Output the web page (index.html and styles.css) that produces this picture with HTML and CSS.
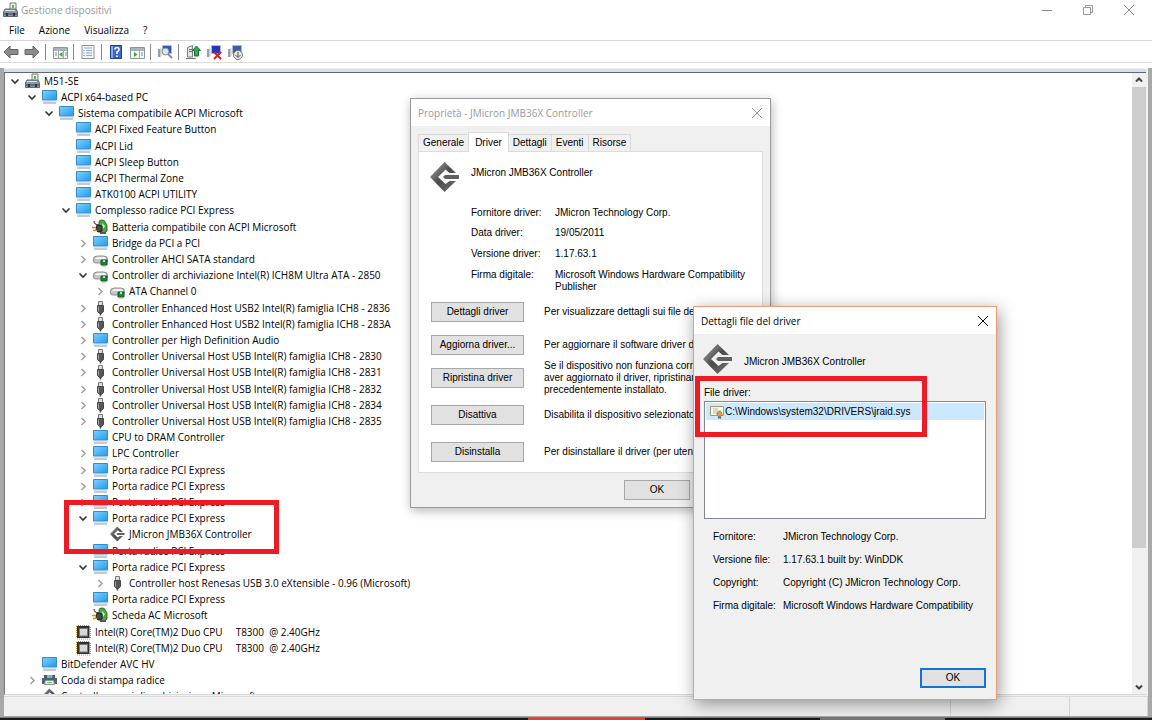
FILE: index.html
```html
<!DOCTYPE html>
<html lang="it">
<head>
<meta charset="utf-8">
<title>Gestione dispositivi</title>
<link rel="stylesheet" href="styles.css">
</head>
<body>
<svg class="defs" aria-hidden="true">
  <defs>
    <linearGradient id="screen" x1="0" y1="0" x2="1" y2="1"><stop offset="0" stop-color="#7fd0fb"/><stop offset="1" stop-color="#1e9cf0"/></linearGradient>
    <linearGradient id="metal" x1="0" y1="0" x2="1" y2="1"><stop offset="0" stop-color="#b0b0b0"/><stop offset=".5" stop-color="#4a4a4a"/><stop offset="1" stop-color="#777"/></linearGradient>
  </defs>
  <symbol id="open" viewBox="0 0 18 16"><path d="M5.500 6.500l3.500 3.500 3.500-3.500" fill="none" stroke="#333" stroke-width="1.6"/></symbol>
  <symbol id="closed" viewBox="0 0 18 16"><path d="M7.500 5l3.500 3.500-3.500 3.500" fill="none" stroke="#9a9a9a" stroke-width="1.4"/></symbol>
  <symbol id="pc" viewBox="0 0 17 16"><path d="M1.500 1.500h14v9.500h-14z" fill="url(#screen)" stroke="#3a8cc0"/><path d="M6 11.500h5v1H6z" fill="#a9bac6"/><path d="M1 12.500h15" stroke="#dbe4ec"/><path d="M2 14h13" stroke="#8398ad"/></symbol>
  <symbol id="machine" viewBox="0 0 17 16"><path d="M8 1h6v7H8z" fill="#eef3ee" stroke="#777"/><path d="M10 3h2v3h-2z" fill="#55b559"/><path d="M3 7h11l1.500 3v4.500h-14V10z" fill="#8b99a3" stroke="#5d6870"/><path d="M3 8h10v1H3z" fill="#dce3e7"/><path d="M2 12h13" stroke="#39424a"/><path d="M4 11h2v3H4zM11 11h2v3h-2z" fill="#2f363c"/></symbol>
  <symbol id="battery" viewBox="0 0 17 16"><path d="M7 3q0-2 3-2t3 2l2 3v6l-3 2-5-1z" fill="#45ad3e" stroke="#234d22" stroke-width=".8"/><path d="M10 4l3 3-2 3z" fill="#d3f1c9"/><path d="M2 2q0 4 5 4" stroke="#222" fill="none"/><path d="M5 6l5 1v5l-4 1-2-2z" fill="#4a4a4a" stroke="#1d1d1d"/><path d="M0 8.500h4M1 11.500h4" stroke="#c9951b" stroke-width="1.600"/><path d="M8 14h6" stroke="#555" stroke-width="2"/></symbol>
  <symbol id="disk" viewBox="0 0 17 16"><path d="M1.500 8q0-3 4-3h6q4 0 4 3v2q0 2-3 2H4q-2.500 0-2.500-2z" fill="#c7c7c7" stroke="#8f8f8f"/><path d="M3 8q1-2 4-2h4q3 0 3 2z" fill="#f4f4f4"/><path d="M9 9h6v5H9z" fill="#21814d" stroke="#0f5632"/><path d="M11 9v2h2V9" fill="#a9e5bb"/><path d="M10 15h4" stroke="#d3a31c"/></symbol>
  <symbol id="usb" viewBox="0 0 17 16"><path d="M6.500 1.500h4v4h-4z" fill="#ddd" stroke="#777"/><path d="M5.500 5.500h6v6l-2 2h-2l-2-2z" fill="#565759" stroke="#46474a"/><path d="M6.500 6.500v5" stroke="#a4a6a9"/><path d="M8.500 13v2.500" stroke="#444" stroke-width="1.500"/></symbol>
  <symbol id="cpu" viewBox="0 0 17 16"><path d="M1.500 2v12M3 1.500h12M15.500 3v12M2 15h13" stroke="#c89225" stroke-dasharray="1 1"/><path d="M2 2h12.500v12H2z" fill="#303030"/><path d="M4 4h9v8.500H4z" fill="#777"/><path d="M5 5h7v6.500H5z" fill="#d8d8d8"/></symbol>
  <symbol id="printer" viewBox="0 0 17 16"><path d="M3 3h11v4H3z" fill="#505b62"/><path d="M6 3h6l-1 3H6z" fill="#4ec9da"/><path d="M1 6h15v6h-3V9H4v3H1z" fill="#566066"/><path d="M4.500 8.500h8l1 4h-10z" fill="#f4f8fa" stroke="#83929b"/><path d="M6 10h5v1H6z" fill="#62c25a"/></symbol>
  <symbol id="jm" viewBox="0 0 32 32"><path d="M1 16L15.500 1 27 12H20.500L16.500 8.500 9 16l7.500 7L20.500 20H27L15.500 31z" fill="url(#metal)"/><path d="M16 14h14v4H16l-2-2z" fill="#606060"/></symbol>
  <symbol id="x" viewBox="0 0 12 12"><path d="M1 1l10 10M11 1L1 11" fill="none" stroke="currentColor"/></symbol>
</svg>

<div class="window">
  <header class="titlebar">
    <svg class="appicon"><use href="#machine"/></svg>
    <h1>Gestione dispositivi</h1>
    <div class="winctl">
      <button aria-label="Riduci a icona"><svg viewBox="0 0 12 12"><path d="M1 6.500h10" stroke="#888"/></svg></button>
      <button aria-label="Ripristina"><svg viewBox="0 0 12 12"><path d="M1.500 3.500h7v7h-7zM3.500 3V1.500h7v7H9" fill="none" stroke="#999"/></svg></button>
      <button aria-label="Chiudi"><svg><use href="#x"/></svg></button>
    </div>
  </header>
  <nav class="menubar"><button>File</button><button>Azione</button><button>Visualizza</button><button>?</button></nav>
  <div class="toolbar">
    <button aria-label="Indietro"><svg viewBox="0 0 16 16"><path d="M1 8l6-6v3.500h8v5H7V14z" fill="#8c8c8c" stroke="#666"/></svg></button>
    <button aria-label="Avanti"><svg viewBox="0 0 16 16"><path d="M15 8L9 2v3.500H1v5h8V14z" fill="#8c8c8c" stroke="#666"/></svg></button>
    <i class="sep"></i>
    <button aria-label="Albero console"><svg viewBox="0 0 16 16"><path d="M1.500 3.500h14v11h-14z" fill="#f6f6f6" stroke="#8d969d"/><path d="M2 4h13v3H2z" fill="#a9b3ba"/><path d="M6.500 7v7M11.500 7v7" stroke="#aaa"/><path d="M3 9h2M3 11h2M13 9h2M13 11h2" stroke="#6a91b5"/><path d="M10.500 8v5L7 10.500z" fill="#39a335"/></svg></button>
    <i class="sep"></i>
    <button aria-label="Proprietà"><svg viewBox="0 0 16 16"><path d="M2 1.500h12v13H2z" fill="#f3f6f8" stroke="#8a949b"/><path d="M4 4h8M6 6.500h6M6 9h6M6 11.500h6" stroke="#8fa9c0"/><path d="M3.500 6.500h1M3.500 9h1M3.500 11.500h1" stroke="#4779ae"/></svg></button>
    <i class="sep"></i>
    <button aria-label="Guida"><svg viewBox="0 0 16 16"><path d="M2.500 1.500h11v13h-11z" fill="#3e69c9" stroke="#20408c"/><path d="M3 2h2v12H3z" fill="#8ba9e8"/><path d="M7 5.500Q7 3.500 9 3.500t2 2Q11 7 9 8v2M9 11.500v1.500" fill="none" stroke="#fff" stroke-width="1.600"/></svg></button>
    <button aria-label="Riquadro azioni"><svg viewBox="0 0 16 16"><path d="M1.500 3.500h14v11h-14z" fill="#f6f6f6" stroke="#8d969d"/><path d="M2 4h13v3H2z" fill="#a9b3ba"/><path d="M10.500 7v7" stroke="#aaa"/><path d="M12 9h2M12 11h2" stroke="#6a91b5"/><path d="M5 8v5l3.500-2.500z" fill="#39a335"/></svg></button>
    <i class="sep"></i>
    <button aria-label="Rileva modifiche hardware"><svg viewBox="0 0 16 16"><path d="M5.500 1.500h9v8h-9z" fill="#2f55b8" stroke="#b4bcc6"/><path d="M1 5h2.500v8H1z" fill="#99a1a8"/><path d="M4 4v8" stroke="#c3c8cc"/><circle cx="8.500" cy="7.500" r="3.500" fill="#cfe8f7" stroke="#77889a"/><path d="M11 10l4 4" stroke="#8a8f95" stroke-width="2"/></svg></button>
    <i class="sep"></i>
    <button aria-label="Aggiorna driver"><svg viewBox="0 0 16 16"><path d="M2.500 3.500L7.500 1.500V13h-5z" fill="#e4e7e4" stroke="#77807a"/><path d="M4 5.500h3M4 7.500h3" stroke="#38804a"/><path d="M1 14.500h10" stroke="#777"/><path d="M11.500 2l4 4.500h-2V12H9.500V6.500h-2z" fill="#39a657" stroke="#1c6b35"/></svg></button>
    <button aria-label="Disinstalla"><svg viewBox="0 0 16 16"><path d="M5.500 1.500h9v8h-9z" fill="#2138b8" stroke="#b4bcc6"/><path d="M1 5h2.500v8H1z" fill="#99a1a8"/><path d="M4 4v8" stroke="#c3c8cc"/><path d="M8 8l7 7M15 8l-7 7" stroke="#d91f1f" stroke-width="2"/></svg></button>
    <button aria-label="Disabilita"><svg viewBox="0 0 16 16"><path d="M5.500 1.500h9v8h-9z" fill="#3c5cad" stroke="#b4bcc6"/><path d="M1 5h2.500v8H1z" fill="#99a1a8"/><path d="M4 4v8" stroke="#c3c8cc"/><circle cx="11" cy="11" r="4.500" fill="#e8e8e8" stroke="#777"/><path d="M11 8v5M8.500 11l2.500 2.500 2.500-2.500" fill="none" stroke="#555"/></svg></button>
  </div>

  <main class="client">
    <div class="pane">
      <ul class="tree">
        <li><svg><use href="#open"/></svg><svg><use href="#machine"/></svg>M51-SE</li>
        <li class="l1"><svg><use href="#open"/></svg><svg><use href="#pc"/></svg>ACPI x64-based PC</li>
        <li class="l2"><svg><use href="#open"/></svg><svg><use href="#pc"/></svg>Sistema compatibile ACPI Microsoft</li>
        <li class="l3"><svg></svg><svg><use href="#pc"/></svg>ACPI Fixed Feature Button</li>
        <li class="l3"><svg></svg><svg><use href="#pc"/></svg>ACPI Lid</li>
        <li class="l3"><svg></svg><svg><use href="#pc"/></svg>ACPI Sleep Button</li>
        <li class="l3"><svg></svg><svg><use href="#pc"/></svg>ACPI Thermal Zone</li>
        <li class="l3"><svg></svg><svg><use href="#pc"/></svg>ATK0100 ACPI UTILITY</li>
        <li class="l3"><svg><use href="#open"/></svg><svg><use href="#pc"/></svg>Complesso radice PCI Express</li>
        <li class="l4"><svg></svg><svg><use href="#battery"/></svg>Batteria compatibile con ACPI Microsoft</li>
        <li class="l4"><svg><use href="#closed"/></svg><svg><use href="#pc"/></svg>Bridge da PCI a PCI</li>
        <li class="l4"><svg><use href="#closed"/></svg><svg><use href="#disk"/></svg>Controller AHCI SATA standard</li>
        <li class="l4"><svg><use href="#open"/></svg><svg><use href="#disk"/></svg>Controller di archiviazione Intel(R) ICH8M Ultra ATA - 2850</li>
        <li class="l5"><svg><use href="#closed"/></svg><svg><use href="#disk"/></svg>ATA Channel 0</li>
        <li class="l4"><svg><use href="#closed"/></svg><svg><use href="#usb"/></svg>Controller Enhanced Host USB2 Intel(R) famiglia ICH8 - 2836</li>
        <li class="l4"><svg><use href="#closed"/></svg><svg><use href="#usb"/></svg>Controller Enhanced Host USB2 Intel(R) famiglia ICH8 - 283A</li>
        <li class="l4"><svg><use href="#closed"/></svg><svg><use href="#pc"/></svg>Controller per High Definition Audio</li>
        <li class="l4"><svg><use href="#closed"/></svg><svg><use href="#usb"/></svg>Controller Universal Host USB Intel(R) famiglia ICH8 - 2830</li>
        <li class="l4"><svg><use href="#closed"/></svg><svg><use href="#usb"/></svg>Controller Universal Host USB Intel(R) famiglia ICH8 - 2831</li>
        <li class="l4"><svg><use href="#closed"/></svg><svg><use href="#usb"/></svg>Controller Universal Host USB Intel(R) famiglia ICH8 - 2832</li>
        <li class="l4"><svg><use href="#closed"/></svg><svg><use href="#usb"/></svg>Controller Universal Host USB Intel(R) famiglia ICH8 - 2834</li>
        <li class="l4"><svg><use href="#closed"/></svg><svg><use href="#usb"/></svg>Controller Universal Host USB Intel(R) famiglia ICH8 - 2835</li>
        <li class="l4"><svg></svg><svg><use href="#pc"/></svg>CPU to DRAM Controller</li>
        <li class="l4"><svg><use href="#closed"/></svg><svg><use href="#pc"/></svg>LPC Controller</li>
        <li class="l4"><svg><use href="#closed"/></svg><svg><use href="#pc"/></svg>Porta radice PCI Express</li>
        <li class="l4"><svg><use href="#closed"/></svg><svg><use href="#pc"/></svg>Porta radice PCI Express</li>
        <li class="l4"><svg><use href="#closed"/></svg><svg><use href="#pc"/></svg>Porta radice PCI Express</li>
        <li class="l4"><svg><use href="#open"/></svg><svg><use href="#pc"/></svg>Porta radice PCI Express</li>
        <li class="l5"><svg></svg><svg><use href="#jm"/></svg>JMicron JMB36X Controller</li>
        <li class="l4"><svg></svg><svg><use href="#pc"/></svg>Porta radice PCI Express</li>
        <li class="l4"><svg><use href="#open"/></svg><svg><use href="#pc"/></svg>Porta radice PCI Express</li>
        <li class="l5"><svg><use href="#closed"/></svg><svg><use href="#usb"/></svg>Controller host Renesas USB 3.0 eXtensible - 0.96 (Microsoft)</li>
        <li class="l4"><svg></svg><svg><use href="#pc"/></svg>Porta radice PCI Express</li>
        <li class="l4"><svg></svg><svg><use href="#battery"/></svg>Scheda AC Microsoft</li>
        <li class="l3"><svg></svg><svg><use href="#cpu"/></svg>Intel(R) Core(TM)2 Duo CPU &nbsp; &nbsp; T8300 &nbsp;@ 2.40GHz</li>
        <li class="l3"><svg></svg><svg><use href="#cpu"/></svg>Intel(R) Core(TM)2 Duo CPU &nbsp; &nbsp; T8300 &nbsp;@ 2.40GHz</li>
        <li class="l1"><svg></svg><svg><use href="#pc"/></svg>BitDefender AVC HV</li>
        <li class="l1"><svg><use href="#closed"/></svg><svg><use href="#printer"/></svg>Coda di stampa radice</li>
        <li class="l1"><svg></svg><svg><use href="#jm"/></svg>Controller spazi di archiviazione Microsoft</li>
      </ul>
      <div class="scrollbar">
        <button aria-label="Scorri su"><svg viewBox="0 0 14 14"><path d="M4 8.500l3-3 3 3" fill="none" stroke="#444" stroke-width="2"/></svg></button>
        <div class="thumb"></div>
        <button aria-label="Scorri giù"><svg viewBox="0 0 14 14"><path d="M4 5.500l3 3 3-3" fill="none" stroke="#444" stroke-width="2"/></svg></button>
      </div>
    </div>
    <footer class="status"><span></span><span></span><span></span></footer>
  </main>
  <div class="taskbar"><i></i><i class="alert"></i><i></i><i class="active"></i></div>
</div>

<section class="dialog props" aria-label="Proprietà">
  <header><h2>Proprietà - JMicron JMB36X Controller</h2><button aria-label="Chiudi"><svg><use href="#x"/></svg></button></header>
  <div class="body">
    <div class="tabs" role="tablist">
      <button role="tab">Generale</button><button role="tab" aria-selected="true" class="active">Driver</button><button role="tab">Dettagli</button><button role="tab">Eventi</button><button role="tab">Risorse</button>
    </div>
    <div class="panel">
      <div class="device"><svg><use href="#jm"/></svg><span>JMicron JMB36X Controller</span></div>
      <dl>
        <dt>Fornitore driver:</dt><dd>JMicron Technology Corp.</dd>
        <dt>Data driver:</dt><dd>19/05/2011</dd>
        <dt>Versione driver:</dt><dd>1.17.63.1</dd>
        <dt>Firma digitale:</dt><dd>Microsoft Windows Hardware Compatibility<br>Publisher</dd>
      </dl>
      <div class="actions">
        <button class="btn">Dettagli driver</button><p>Per visualizzare dettagli sui file dei driver.</p>
        <button class="btn">Aggiorna driver...</button><p>Per aggiornare il software driver del dispositivo.</p>
        <button class="btn">Ripristina driver</button><p>Se il dispositivo non funziona correttamente<br>aver aggiornato il driver, ripristinare il driver<br>precedentemente installato.</p>
        <button class="btn">Disattiva</button><p>Disabilita il dispositivo selezionato.</p>
        <button class="btn">Disinstalla</button><p>Per disinstallare il driver (per utenti esperti).</p>
      </div>
    </div>
    <div class="buttons"><button class="btn">OK</button></div>
  </div>
</section>

<section class="dialog details" aria-label="Dettagli file del driver">
  <header><h2>Dettagli file del driver</h2><button aria-label="Chiudi"><svg><use href="#x"/></svg></button></header>
  <div class="body">
    <div class="device"><svg><use href="#jm"/></svg><span>JMicron JMB36X Controller</span></div>
    <p id="files-label" class="label">File driver:</p>
    <ul class="listbox" role="listbox" aria-labelledby="files-label">
      <li role="option" aria-selected="true"><svg viewBox="0 0 16 14"><path d="M1.500 1.500h13v9h-13z" fill="#fdfdfb" stroke="#b8935c"/><path d="M4 4h5M4 6h8M4 8h4" stroke="#9fb5dc"/><path d="M9 10v4l1.500-1 1.500 1v-4z" fill="#2f6dc9"/><circle cx="10.500" cy="9" r="2.500" fill="#eaa91c" stroke="#c17d0e"/></svg>C:\Windows\system32\DRIVERS\jraid.sys</li>
    </ul>
    <dl>
      <dt>Fornitore:</dt><dd>JMicron Technology Corp.</dd>
      <dt>Versione file:</dt><dd>1.17.63.1 built by: WinDDK</dd>
      <dt>Copyright:</dt><dd>Copyright (C) JMicron Technology Corp.</dd>
      <dt>Firma digitale:</dt><dd>Microsoft Windows Hardware Compatibility</dd>
    </dl>
    <div class="buttons"><button class="btn default">OK</button></div>
  </div>
</section>

<div class="mark mark-tree"></div>
<div class="mark mark-file"></div>
</body>
</html>
```
FILE: styles.css
```css
* { box-sizing: border-box; }
body, h1, h2, p, ul, dl, dd { margin: 0; padding: 0; }
body {
  height: 100vh;
  overflow: hidden;
  font: 10px/16px "Open Sans", "Noto Sans", sans-serif;
  color: #000;
  background: #fff;
}
button { font: inherit; color: inherit; border: 0; padding: 0; background: none; }
ul { list-style: none; }
svg { display: block; flex: none; }
.defs { position: absolute; width: 0; height: 0; }

.window { display: flex; flex-direction: column; height: 100vh; }
.titlebar { display: flex; align-items: center; height: 20px; padding-left: 2px; }
.appicon { width: 17px; height: 16px; }
.titlebar h1 { flex: 1; margin-left: 2px; font-size: 10px; font-weight: 400; color: #999; }
.winctl { display: flex; padding-right: 3px; }
.winctl button { width: 41px; height: 18px; display: grid; place-items: center; color: #888; }
.winctl svg { width: 12px; height: 12px; }
.menubar { display: flex; height: 20px; padding-left: 9px; gap: 14px; align-items: center; }
.toolbar {
  display: flex;
  align-items: center;
  gap: 1px;
  height: 23px;
  padding-left: 1px;
  border-top: 1px solid #d4d4d4;
  border-bottom: 1px solid #dcdcdc;
}
.toolbar button { width: 20px; height: 18px; display: grid; place-items: center; }
.toolbar svg { width: 16px; height: 16px; }
.sep { width: 1px; height: 16px; margin: 0 3px 0 2px; background: #888; }

.client {
  flex: 1;
  min-height: 0;
  display: flex;
  flex-direction: column;
  margin-top: 5px;
  border: solid #a8a8a8;
  border-width: 0 4px;
  background: #f0f0f0;
}
.pane {
  flex: 1;
  min-height: 0;
  display: flex;
  margin: 5px 2px 0 0;
  border-left: 1px solid #777;
  border-bottom: 1px solid #d9d9d9;
  box-shadow: 0 -1px #666, 0 -4px #d0e0f0;
  background: #fff;
}
.tree { flex: 1; overflow: hidden; padding-left: 1px; white-space: nowrap; }
.tree li { display: flex; align-items: center; height: 16px; }
.tree li:nth-child(5n) { height: 17px; }
.tree svg { width: 17px; height: 16px; margin-right: 3px; }
.tree svg:first-child { width: 18px; margin-right: 0; }
.l1 { margin-left: 17px; }
.l2 { margin-left: 34px; }
.l3 { margin-left: 51px; }
.l4 { margin-left: 68px; }
.l5 { margin-left: 85px; }
.scrollbar { display: flex; flex-direction: column; width: 14px; background: #f0f0f0; }
.scrollbar svg { width: 14px; height: 14px; }
.scrollbar .thumb { flex: 1; margin-bottom: 132px; background: #cdcdcd; }
.status {
  display: grid;
  grid-template-columns: 1fr 119px 78px;
  height: 21px;
  margin-top: 1px;
  border-top: 1px solid #d9d9d9;
  border-bottom: 1px solid #aaa;
}
.status span { border-right: 1px solid #d4d4d4; }
.taskbar { display: grid; grid-template-columns: 528fr 117fr 175fr 125fr 207fr; height: 3px; background: #17191c; border-top: 1px solid #777; }
.taskbar .alert { background: #d9423a; }
.taskbar .active { background: #777; }

.dialog {
  position: absolute;
  display: flex;
  flex-direction: column;
  background: #f0f0f0;
  font: 10px/12px "Liberation Sans", Arial, sans-serif;
}
.dialog header { flex: none; display: flex; align-items: center; height: 27px; padding: 0 7px; background: #fff; }
.dialog h2 { flex: 1; font: 10px/16px "Open Sans", "Noto Sans", sans-serif; }
.dialog header svg { width: 12px; height: 12px; }
.device { display: flex; align-items: center; }
.device svg { width: 32px; height: 32px; }
.body { flex: 1; display: flex; flex-direction: column; }
dl { display: grid; white-space: nowrap; }
.btn { border: 1px solid #a8a8a8; background: #e1e1e1; height: 20px; }
.default { border: 2px solid #0f74d8; }

.props { left: 410px; top: 98px; width: 361px; height: 410px; border: 1px solid #9a9a9a; box-shadow: 1px 3px 10px rgba(0,0,0,.28); }
.props h2, .props header button { color: #999; }
.props .body { padding: 6px 7px 7px; }
.tabs { flex: none; display: flex; align-items: flex-end; height: 19px; }
.tabs button { height: 17px; padding: 0 4px; margin-right: -1px; border: 1px solid #d9d9d9; border-bottom: 0; }
.tabs .active { position: relative; height: 20px; margin-bottom: -1px; padding: 0 6px; background: #fff; }
.panel { flex: 1; padding: 9px 12px 0; border: 1px solid #dcdcdc; background: #fff; margin-bottom: 7px; }
.panel .device { align-items: flex-start; gap: 10px; }
.panel .device svg { margin-left: -2px; }
.panel .device span { margin-top: 6px; }
.panel dl { grid-template-columns: 84px 1fr; grid-template-rows: 20px 21px 21px 24px; padding: 14px 0 0 40px; }
.actions { display: grid; grid-template-columns: 93px 1fr; column-gap: 20px; margin-top: 2px; grid-template-rows: 33px 33px 33px 41px 33px; align-items: center; white-space: nowrap; }
.buttons { display: flex; justify-content: flex-end; }
.buttons .btn { width: 66px; }
.props .buttons { padding-right: 73px; height: 20px; }

.details { left: 693px; top: 306px; width: 304px; height: 394px; border: 1px solid #ee9a74; box-shadow: 2px 4px 16px rgba(0,0,0,.4); }
.details .body { padding: 8px 10px 11px; }
.details .device { gap: 10px; height: 34px; margin-left: -2px; }
.details .device span { padding-top: 6px; }
.label { margin: 11px 0 2px; }
.listbox { height: 118px; padding: 1px; border: 1px solid #828790; background: #fff; }
.listbox li { display: flex; align-items: center; height: 17px; padding-left: 3px; background: #cce8ff; }
.listbox svg { width: 16px; height: 14px; }
.details dl { grid-template-columns: 70px 1fr; grid-auto-rows: 23px; padding: 12px 0 0 9px; }
.details .buttons { margin-top: auto; }

.mark { position: absolute; border: 5px solid #ed1c24; }
.mark-tree { left: 64px; top: 500px; width: 215px; height: 54px; }
.mark-file { left: 695px; top: 376px; width: 232px; height: 61px; }
```
